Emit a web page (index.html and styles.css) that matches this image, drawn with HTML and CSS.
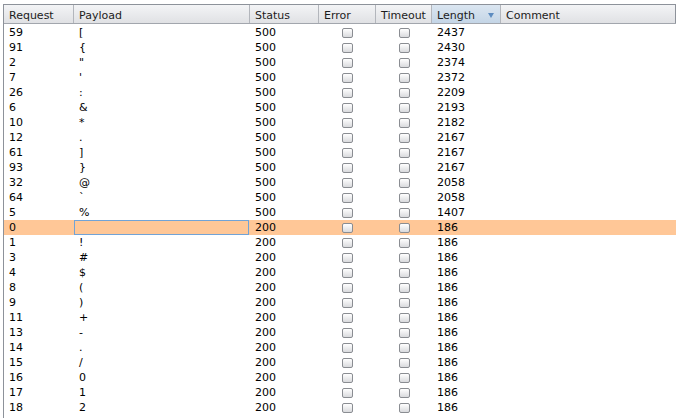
FILE: index.html
```html
<!DOCTYPE html>
<html>
<head>
<meta charset="utf-8">
<link rel="stylesheet" href="styles.css">
</head>
<body>
<div class="table">
  <div class="row head">
    <div class="hc">Request</div>
    <div class="hc">Payload</div>
    <div class="hc">Status</div>
    <div class="hc">Error</div>
    <div class="hc">Timeout</div>
    <div class="hc sorted">Length<span class="arrow"></span></div>
    <div class="hc last">Comment</div>
  </div>
  <div class="rows">
    <div class="row"><div class="c">59</div><div class="c">[</div><div class="c">500</div><div class="c ck"><span class="box"></span></div><div class="c ck"><span class="box"></span></div><div class="c">2437</div><div class="c"></div></div>
    <div class="row"><div class="c">91</div><div class="c">{</div><div class="c">500</div><div class="c ck"><span class="box"></span></div><div class="c ck"><span class="box"></span></div><div class="c">2430</div><div class="c"></div></div>
    <div class="row"><div class="c">2</div><div class="c">"</div><div class="c">500</div><div class="c ck"><span class="box"></span></div><div class="c ck"><span class="box"></span></div><div class="c">2374</div><div class="c"></div></div>
    <div class="row"><div class="c">7</div><div class="c">'</div><div class="c">500</div><div class="c ck"><span class="box"></span></div><div class="c ck"><span class="box"></span></div><div class="c">2372</div><div class="c"></div></div>
    <div class="row"><div class="c">26</div><div class="c">:</div><div class="c">500</div><div class="c ck"><span class="box"></span></div><div class="c ck"><span class="box"></span></div><div class="c">2209</div><div class="c"></div></div>
    <div class="row"><div class="c">6</div><div class="c">&amp;</div><div class="c">500</div><div class="c ck"><span class="box"></span></div><div class="c ck"><span class="box"></span></div><div class="c">2193</div><div class="c"></div></div>
    <div class="row"><div class="c">10</div><div class="c">*</div><div class="c">500</div><div class="c ck"><span class="box"></span></div><div class="c ck"><span class="box"></span></div><div class="c">2182</div><div class="c"></div></div>
    <div class="row"><div class="c">12</div><div class="c">.</div><div class="c">500</div><div class="c ck"><span class="box"></span></div><div class="c ck"><span class="box"></span></div><div class="c">2167</div><div class="c"></div></div>
    <div class="row"><div class="c">61</div><div class="c">]</div><div class="c">500</div><div class="c ck"><span class="box"></span></div><div class="c ck"><span class="box"></span></div><div class="c">2167</div><div class="c"></div></div>
    <div class="row"><div class="c">93</div><div class="c">}</div><div class="c">500</div><div class="c ck"><span class="box"></span></div><div class="c ck"><span class="box"></span></div><div class="c">2167</div><div class="c"></div></div>
    <div class="row"><div class="c">32</div><div class="c">@</div><div class="c">500</div><div class="c ck"><span class="box"></span></div><div class="c ck"><span class="box"></span></div><div class="c">2058</div><div class="c"></div></div>
    <div class="row"><div class="c">64</div><div class="c">`</div><div class="c">500</div><div class="c ck"><span class="box"></span></div><div class="c ck"><span class="box"></span></div><div class="c">2058</div><div class="c"></div></div>
    <div class="row"><div class="c">5</div><div class="c">%</div><div class="c">500</div><div class="c ck"><span class="box"></span></div><div class="c ck"><span class="box"></span></div><div class="c">1407</div><div class="c"></div></div>
    <div class="row selected"><div class="c">0</div><div class="c focus"></div><div class="c">200</div><div class="c ck"><span class="box"></span></div><div class="c ck"><span class="box"></span></div><div class="c">186</div><div class="c"></div></div>
    <div class="row"><div class="c">1</div><div class="c">!</div><div class="c">200</div><div class="c ck"><span class="box"></span></div><div class="c ck"><span class="box"></span></div><div class="c">186</div><div class="c"></div></div>
    <div class="row"><div class="c">3</div><div class="c">#</div><div class="c">200</div><div class="c ck"><span class="box"></span></div><div class="c ck"><span class="box"></span></div><div class="c">186</div><div class="c"></div></div>
    <div class="row"><div class="c">4</div><div class="c">$</div><div class="c">200</div><div class="c ck"><span class="box"></span></div><div class="c ck"><span class="box"></span></div><div class="c">186</div><div class="c"></div></div>
    <div class="row"><div class="c">8</div><div class="c">(</div><div class="c">200</div><div class="c ck"><span class="box"></span></div><div class="c ck"><span class="box"></span></div><div class="c">186</div><div class="c"></div></div>
    <div class="row"><div class="c">9</div><div class="c">)</div><div class="c">200</div><div class="c ck"><span class="box"></span></div><div class="c ck"><span class="box"></span></div><div class="c">186</div><div class="c"></div></div>
    <div class="row"><div class="c">11</div><div class="c">+</div><div class="c">200</div><div class="c ck"><span class="box"></span></div><div class="c ck"><span class="box"></span></div><div class="c">186</div><div class="c"></div></div>
    <div class="row"><div class="c">13</div><div class="c">-</div><div class="c">200</div><div class="c ck"><span class="box"></span></div><div class="c ck"><span class="box"></span></div><div class="c">186</div><div class="c"></div></div>
    <div class="row"><div class="c">14</div><div class="c">.</div><div class="c">200</div><div class="c ck"><span class="box"></span></div><div class="c ck"><span class="box"></span></div><div class="c">186</div><div class="c"></div></div>
    <div class="row"><div class="c">15</div><div class="c">/</div><div class="c">200</div><div class="c ck"><span class="box"></span></div><div class="c ck"><span class="box"></span></div><div class="c">186</div><div class="c"></div></div>
    <div class="row"><div class="c">16</div><div class="c">0</div><div class="c">200</div><div class="c ck"><span class="box"></span></div><div class="c ck"><span class="box"></span></div><div class="c">186</div><div class="c"></div></div>
    <div class="row"><div class="c">17</div><div class="c">1</div><div class="c">200</div><div class="c ck"><span class="box"></span></div><div class="c ck"><span class="box"></span></div><div class="c">186</div><div class="c"></div></div>
    <div class="row"><div class="c">18</div><div class="c">2</div><div class="c">200</div><div class="c ck"><span class="box"></span></div><div class="c ck"><span class="box"></span></div><div class="c">186</div><div class="c"></div></div>
    <div class="row"><div class="c"></div><div class="c"></div><div class="c"></div><div class="c ck"><span class="box"></span></div><div class="c ck"><span class="box"></span></div><div class="c"></div><div class="c"></div></div>
  </div>
</div>
</body>
</html>
```
FILE: styles.css
```css
html, body {
  margin: 0;
  padding: 0;
  background: #ffffff;
  overflow: hidden;
  height: 418px;
}
body {
  font-family: "DejaVu Sans", sans-serif;
  font-size: 11px;
  color: #000;
}
.table {
  margin: 4px 0 0 3px;
  width: 673px;
  height: 414px;
  border-left: 1px solid #8d929a;
  box-sizing: border-box;
  overflow: hidden;
}
.row {
  display: grid;
  grid-template-columns: 70px 176px 69px 57px 56px 69px 175px;
  height: 15px;
  line-height: 15px;
}
.head {
  height: 20px;
  line-height: 19px;
  box-sizing: border-box;
  border-top: 1px solid #8d929a;
  border-bottom: 1px solid #a2a6ad;
  color: #1c1c1c;
}
.hc {
  padding: 1px 0 0 5px;
  background: linear-gradient(#f3f4f6, #e0e1e4);
  border-right: 1px solid #b3b6bc;
  white-space: nowrap;
  overflow: hidden;
  position: relative;
}
.hc.last {
  border-right: 1px solid #8d929a;
}
.hc.sorted {
  background: linear-gradient(#dbe6f1, #c4d5e6);
}
.arrow {
  position: absolute;
  left: 56px;
  top: 8px;
  width: 0;
  height: 0;
  border-left: 3.5px solid transparent;
  border-right: 3.5px solid transparent;
  border-top: 5px solid #5d8cc0;
}
.rows {
  padding-top: 1px;
}
.c {
  padding-left: 5px;
  white-space: nowrap;
  overflow: hidden;
}
.ck {
  padding-left: 0;
  display: flex;
  justify-content: center;
  align-items: center;
}
.box {
  width: 11px;
  height: 10px;
  box-sizing: border-box;
  border: 1px solid #8a8d92;
  border-radius: 2px;
  background: linear-gradient(#ffffff, #d9dadd);
}
.selected {
  background: #ffc797;
}
.focus {
  box-sizing: border-box;
  border: 1px solid #72a3d6;
  margin-right: 1px;
}
```
